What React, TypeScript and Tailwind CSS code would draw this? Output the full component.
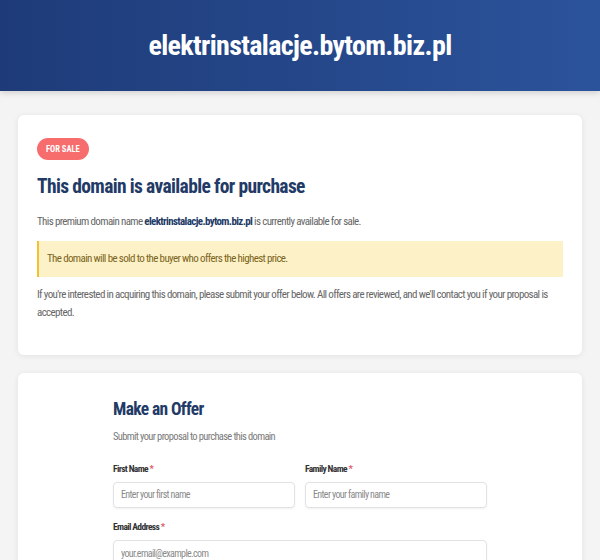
export default function App() {
    const inputCls = "w-full h-[26px] rounded-[4px] border border-[#e2e2e2] shadow-[0_1px_2px_rgba(0,0,0,0.06)] px-[7px] text-[10px] text-[#333] placeholder:text-[#8a8a8a] outline-none";
    const labelCls = "block text-[9.5px] font-bold text-[#333] leading-[12px]";
    return (
        <div className="min-h-[560px] bg-[#f4f4f4] font-['Roboto',sans-serif] font-stretch-condensed tracking-[-0.04em]">
            <header className="h-[91px] flex items-center justify-center bg-gradient-to-r from-[#1e3b78] to-[#2b539b] shadow-[0_2px_6px_rgba(0,0,0,0.15)]">
                <h1 className="text-[28px] font-bold text-white">elektrinstalacje.bytom.biz.pl</h1>
            </header>

            <main className="px-[18px] pt-[24px] space-y-[18px]">
                <section className="bg-white rounded-md shadow-[0_1px_6px_rgba(0,0,0,0.08)] px-[19px] pt-[23px] pb-[33px]">
                    <div className="flex">
                        <span className="rounded-full bg-[#f76c6c] text-white text-[8.5px] font-bold uppercase px-[9px] py-[6px] leading-[10px] tracking-normal">For Sale</span>
                    </div>
                    <h2 className="mt-[14px] text-[19.5px] font-bold text-[#223a66] leading-[26px]">This domain is available for purchase</h2>
                    <p className="mt-[13px] text-[11px] text-[#666] leading-[18px]">
                        This premium domain name <strong className="text-[#223a66]">elektrinstalacje.bytom.biz.pl</strong> is currently available for sale.
                    </p>
                    <div className="mt-[10px] bg-[#fdf1c7] border-l-2 border-[#f2c230] px-[8px] py-[9px] text-[11px] leading-[18px] text-[#7a6420]">
                        The domain will be sold to the buyer who offers the highest price.
                    </div>
                    <p className="mt-[9px] text-[11px] text-[#666] leading-[18px]">
                        If you're interested in acquiring this domain, please submit your offer below. All offers are reviewed, and we'll contact you if your proposal is accepted.
                    </p>
                </section>

                <section className="bg-white rounded-md shadow-[0_1px_6px_rgba(0,0,0,0.08)] pt-[24px] pb-[30px]">
                    <div className="w-[374px] mx-auto">
                        <h2 className="text-[17.5px] font-bold text-[#223a66] leading-[24px]">Make an Offer</h2>
                        <p className="mt-[8px] text-[10.5px] text-[#7a7a7a] leading-[16px]">Submit your proposal to purchase this domain</p>
                        <div className="mt-[18px] grid grid-cols-2 gap-[10px]">
                            <div className="space-y-[6px]">
                                <label className={labelCls}>First Name <span className="text-[#e05a6a]">*</span></label>
                                <input className={inputCls} placeholder="Enter your first name" />
                            </div>
                            <div className="space-y-[6px]">
                                <label className={labelCls}>Family Name <span className="text-[#e05a6a]">*</span></label>
                                <input className={inputCls} placeholder="Enter your family name" />
                            </div>
                        </div>
                        <div className="mt-[13px] space-y-[7px]">
                            <label className={labelCls}>Email Address <span className="text-[#e05a6a]">*</span></label>
                            <input className={inputCls} placeholder="your.email@example.com" />
                        </div>
                    </div>
                </section>
            </main>
        </div>
    );
}
